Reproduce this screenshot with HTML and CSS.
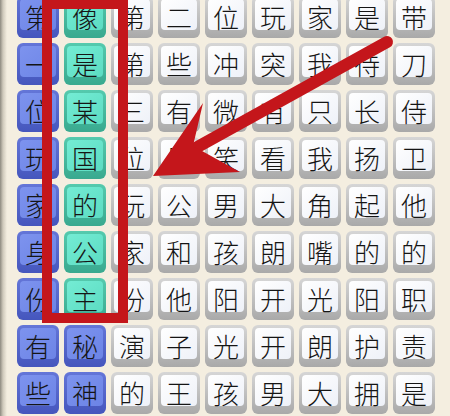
FILE: index.html
```html
<!DOCTYPE html>
<html lang="zh">
<head>
<meta charset="utf-8">
<link rel="stylesheet" href="styles.css">
</head>
<body>
<div class="stage">
  <div class="board">
    <div class="tile blue"><span>第</span></div><div class="tile teal"><span>像</span></div><div class="tile"><span>第</span></div><div class="tile"><span>二</span></div><div class="tile"><span>位</span></div><div class="tile"><span>玩</span></div><div class="tile"><span>家</span></div><div class="tile"><span>是</span></div><div class="tile"><span>带</span></div>
    <div class="tile blue"><span>一</span></div><div class="tile teal"><span>是</span></div><div class="tile"><span>第</span></div><div class="tile"><span>些</span></div><div class="tile"><span>冲</span></div><div class="tile"><span>突</span></div><div class="tile"><span>我</span></div><div class="tile"><span>待</span></div><div class="tile"><span>刀</span></div>
    <div class="tile blue"><span>位</span></div><div class="tile teal"><span>某</span></div><div class="tile"><span>三</span></div><div class="tile"><span>有</span></div><div class="tile"><span>微</span></div><div class="tile"><span>有</span></div><div class="tile"><span>只</span></div><div class="tile"><span>长</span></div><div class="tile"><span>侍</span></div>
    <div class="tile blue"><span>玩</span></div><div class="tile teal"><span>国</span></div><div class="tile"><span>位</span></div><div class="tile"><span>是</span></div><div class="tile"><span>笑</span></div><div class="tile"><span>看</span></div><div class="tile"><span>我</span></div><div class="tile"><span>扬</span></div><div class="tile"><span>卫</span></div>
    <div class="tile blue"><span>家</span></div><div class="tile teal"><span>的</span></div><div class="tile"><span>玩</span></div><div class="tile"><span>公</span></div><div class="tile"><span>男</span></div><div class="tile"><span>大</span></div><div class="tile"><span>角</span></div><div class="tile"><span>起</span></div><div class="tile"><span>他</span></div>
    <div class="tile blue"><span>身</span></div><div class="tile teal"><span>公</span></div><div class="tile"><span>家</span></div><div class="tile"><span>和</span></div><div class="tile"><span>孩</span></div><div class="tile"><span>朗</span></div><div class="tile"><span>嘴</span></div><div class="tile"><span>的</span></div><div class="tile"><span>的</span></div>
    <div class="tile blue"><span>份</span></div><div class="tile teal"><span>主</span></div><div class="tile"><span>份</span></div><div class="tile"><span>他</span></div><div class="tile"><span>阳</span></div><div class="tile"><span>开</span></div><div class="tile"><span>光</span></div><div class="tile"><span>阳</span></div><div class="tile"><span>职</span></div>
    <div class="tile blue"><span>有</span></div><div class="tile blue"><span>秘</span></div><div class="tile"><span>演</span></div><div class="tile"><span>子</span></div><div class="tile"><span>光</span></div><div class="tile"><span>开</span></div><div class="tile"><span>朗</span></div><div class="tile"><span>护</span></div><div class="tile"><span>责</span></div>
    <div class="tile blue"><span>些</span></div><div class="tile blue"><span>神</span></div><div class="tile"><span>的</span></div><div class="tile"><span>王</span></div><div class="tile"><span>孩</span></div><div class="tile"><span>男</span></div><div class="tile"><span>大</span></div><div class="tile"><span>拥</span></div><div class="tile"><span>是</span></div>
  </div>
  <svg class="overlay" width="450" height="416" viewBox="0 0 450 416" xmlns="http://www.w3.org/2000/svg">
    <rect x="47" y="4" width="76" height="314" fill="none" stroke="#c4161b" stroke-width="10"/>
    <line x1="387" y1="42" x2="192" y2="150" stroke="#c4161b" stroke-width="12" stroke-linecap="round"/>
    <polygon points="153,176 203,103 193,146 240,172" fill="#c4161b"/>
  </svg>
</div>
</body>
</html>
```
FILE: styles.css
```css
html, body {
  margin: 0;
  padding: 0;
}
body {
  width: 450px;
  height: 416px;
  overflow: hidden;
  background: #f4eee0;
  font-family: "Noto Sans CJK SC", "Noto Sans CJK JP", sans-serif;
}
.stage {
  position: relative;
  width: 450px;
  height: 416px;
  overflow: hidden;
  background: linear-gradient(to right, #8e8a80 0px, #cfc9bb 3px, #f4eee0 7px);
}
.board {
  display: grid;
  grid-template-columns: repeat(9, 42px);
  grid-auto-rows: 42px;
  gap: 5px;
  padding-left: 17px;
  margin-top: -4px;
}
.tile {
  box-sizing: border-box;
  border-radius: 6px;
  padding: 3px 3px 8px 3px;
  background: linear-gradient(to bottom, #d6d6d6, #a9a9a9);
  display: flex;
}
.tile span {
  flex: 1;
  border-radius: 4px;
  background: linear-gradient(to bottom right, #ffffff, #eef1f8);
  display: flex;
  align-items: center;
  justify-content: center;
  font-size: 26px;
  font-weight: 300;
  line-height: 1;
  color: #151515;
  padding-top: 5px;
}
.tile.blue {
  background: linear-gradient(to bottom, #6476d8, #4556bd);
}
.tile.blue span {
  background: linear-gradient(to bottom right, #7d93ee, #6c84e6);
}
.tile.teal {
  background: linear-gradient(to bottom, #55caae, #39a98f);
}
.tile.teal span {
  background: linear-gradient(to bottom right, #74ecd4, #5cdcc2);
}
.overlay {
  position: absolute;
  left: 0;
  top: 0;
}
```
